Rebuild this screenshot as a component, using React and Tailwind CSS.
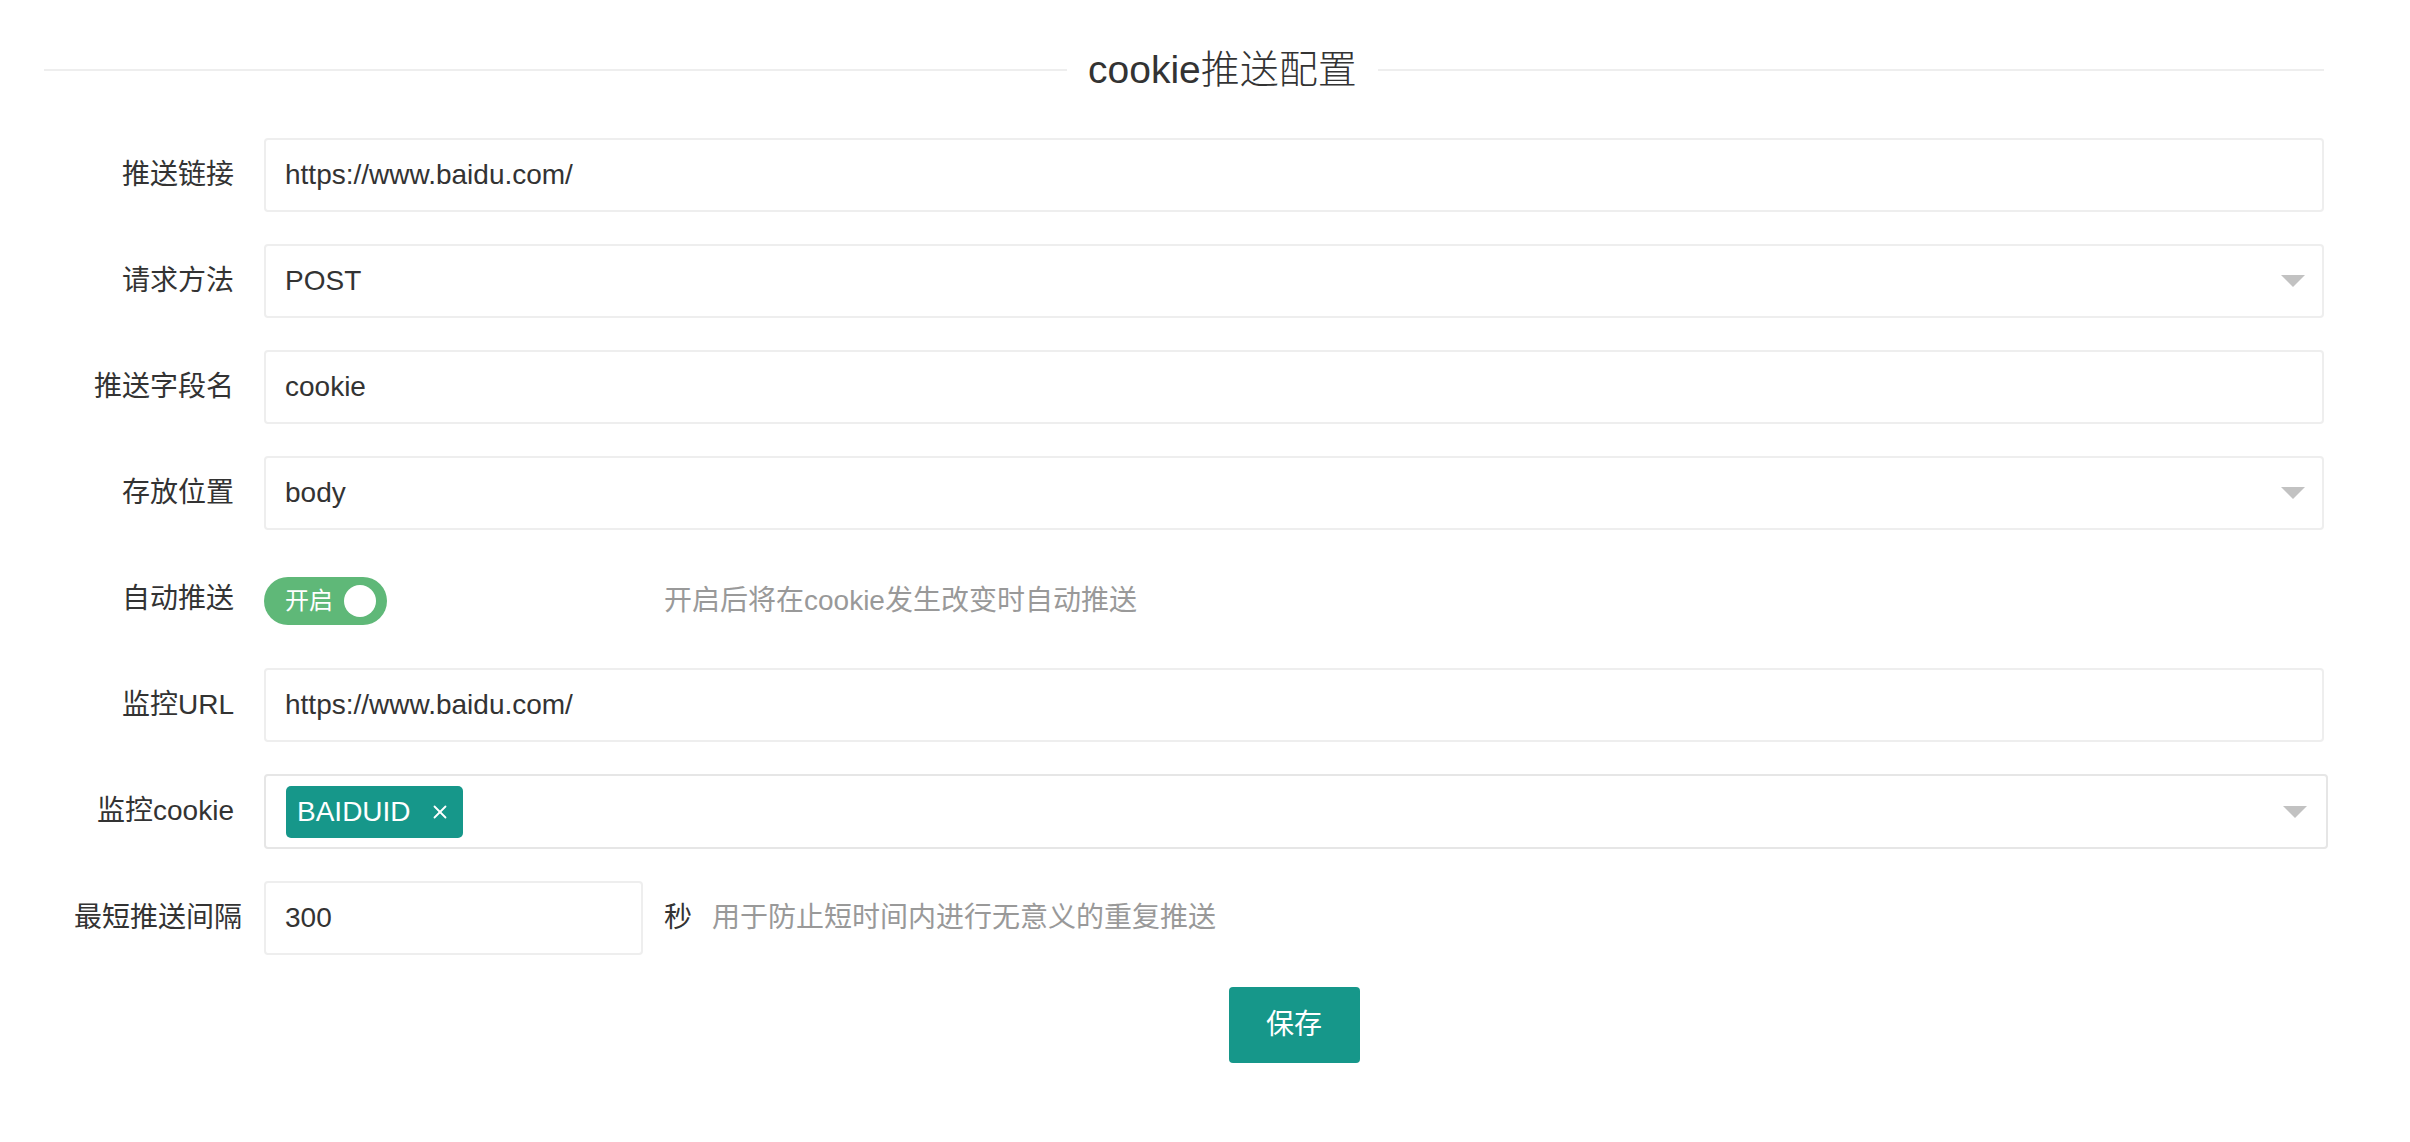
import { X } from 'lucide-react';

const fieldFont = { fontFamily: '"Liberation Sans", "Noto Sans CJK SC", sans-serif' };

const Label = ({ children }) => (
  <div className="w-[220px] shrink-0 whitespace-nowrap px-[30px] text-right text-[28px] leading-[74px] text-[#333]">
    {children}
  </div>
);

const TextInput = ({ value, className = 'flex-1' }) => (
  <div className={`${className} flex h-[74px] items-center rounded-[4px] border-2 border-[#eee] bg-white pl-[19px] text-[28px] text-[#333]`}>
    {value}
  </div>
);

const Arrow = () => (
  <span className="h-0 w-0 border-x-[12px] border-t-[12px] border-x-transparent border-t-[#c2c2c2]" />
);

const SelectInput = ({ value }) => (
  <div className="flex h-[74px] flex-1 items-center justify-between rounded-[4px] border-2 border-[#eee] bg-white pl-[19px] pr-[17px] text-[28px] text-[#333]">
    <span>{value}</span>
    <Arrow />
  </div>
);

export default function App() {
  return (
    <div className="min-h-screen w-full bg-white" style={fieldFont}>
      <div className="pl-[44px] pr-[86px]">
        {/* title divider */}
        <div className="mt-[46px] flex h-[48px] items-center">
          <div className="h-[2px] w-[1023px] bg-[#eee]" />
          <div className="px-[21px] text-[39px] font-light leading-[48px] text-[#333]">cookie推送配置</div>
          <div className="h-[2px] flex-1 bg-[#eee]" />
        </div>

        <div className="mt-[44px] flex flex-col gap-[32px]">
          <div className="flex">
            <Label>推送链接</Label>
            <TextInput value="https://www.baidu.com/" />
          </div>

          <div className="flex">
            <Label>请求方法</Label>
            <SelectInput value="POST" />
          </div>

          <div className="flex">
            <Label>推送字段名</Label>
            <TextInput value="cookie" />
          </div>

          <div className="flex">
            <Label>存放位置</Label>
            <SelectInput value="body" />
          </div>

          <div className="flex">
            <Label>自动推送</Label>
            <div className="flex h-[74px] items-center pt-[4px]">
              <div className="flex w-[380px] items-center">
                <div className="flex h-[48px] w-[123px] items-center justify-between rounded-full bg-[#5fb878] pl-[21px] pr-[11px]">
                  <span className="text-[24px] text-white">开启</span>
                  <span className="h-[32px] w-[32px] rounded-full bg-white" />
                </div>
              </div>
              <span className="ml-[20px] text-[28px] text-[#999]">开启后将在cookie发生改变时自动推送</span>
            </div>
          </div>

          <div className="flex">
            <Label>监控URL</Label>
            <TextInput value="https://www.baidu.com/" />
          </div>

          <div className="flex">
            <Label>监控cookie</Label>
            <div className="mr-[-4px] flex h-[75px] flex-1 items-center justify-between rounded-[4px] border-2 border-[#e6e6e6] bg-white pl-[20px] pr-[19px]">
              <div className="flex h-[52px] items-center gap-[18px] rounded-[5px] bg-[#16978a] pl-[11px] pr-[12px] text-[28px] text-white">
                <span>BAIDUID</span>
                <X className="h-[22px] w-[22px]" strokeWidth={2} />
              </div>
              <Arrow />
            </div>
          </div>

          <div className="flex">
            <Label>最短推送间隔</Label>
            <div className="flex items-center">
              <TextInput value="300" className="w-[379px]" />
              <span className="ml-[21px] text-[28px] text-[#333]">秒</span>
              <span className="ml-[20px] text-[28px] text-[#999]">用于防止短时间内进行无意义的重复推送</span>
            </div>
          </div>

          <div className="flex justify-center pl-[220px]">
            <button className="h-[76px] w-[131px] rounded-[4px] bg-[#16978a] text-[28px] text-white">保存</button>
          </div>
        </div>
      </div>
    </div>
  );
}
